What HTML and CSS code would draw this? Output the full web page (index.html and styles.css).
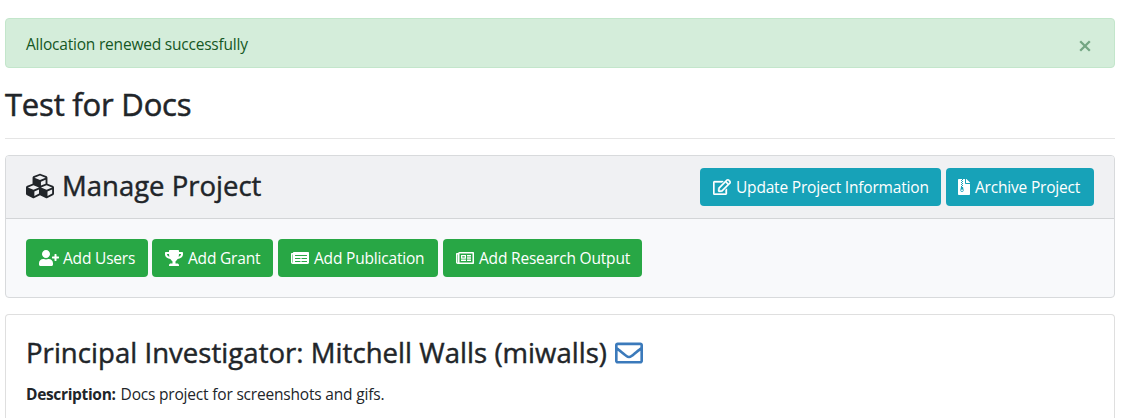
FILE: index.html
```html
<!DOCTYPE html>
<html lang="en">
<head>
<meta charset="utf-8">
<title>Test for Docs</title>
<link rel="stylesheet" href="styles.css">
</head>
<body>
<main class="container">
  <div class="alert"><span class="alert-text">Allocation renewed successfully</span><button class="close" aria-label="Close"><svg viewBox="0 0 12 12"><path d="M1.2 1.2l9.6 9.6M10.8 1.2l-9.6 9.6"/></svg></button></div>
  <h1 class="page-title">Test for Docs</h1>
  <hr class="rule">
  <section class="card manage">
    <header class="card-header">
      <h2 class="heading manage-heading"><svg class="icon icon-lg cubes" viewBox="0 0 512 512"><path d="M488.6 250.2L392 214V105.5c0-15-9.3-28.4-23.4-33.7l-100-37.5c-8.1-3.1-17.1-3.1-25.3 0l-100 37.5c-14.1 5.3-23.4 18.7-23.4 33.7V214l-96.6 36.2C9.3 255.5 0 268.9 0 283.9V394c0 13.6 7.7 26.1 19.9 32.2l100 50c10.1 5.1 22.1 5.1 32.2 0l103.9-52 103.9 52c10.1 5.1 22.1 5.1 32.2 0l100-50c12.2-6.1 19.9-18.6 19.9-32.2V283.9c0-15-9.3-28.4-23.4-33.7zM358 214.8l-85 31.9v-68.2l85-37v73.3zM154 104.1l102-38.2 102 38.2v.6l-102 41.4-102-41.4v-.6zm84 291.1l-85 42.5v-79.1l85-38.8v75.4zm0-112l-102 41.4-102-41.4v-.6l102-38.2 102 38.2v.6zm240 112l-85 42.5v-79.1l85-38.8v75.4zm0-112l-102 41.4-102-41.4v-.6l102-38.2 102 38.2v.6z"/></svg><span>Manage Project</span></h2>
      <div class="actions">
        <a class="btn info update"><svg class="icon w18 edit" viewBox="0 0 576 512"><path d="M402.3 344.9l32-32c5-5 13.7-1.5 13.7 5.7V464c0 26.5-21.5 48-48 48H48c-26.5 0-48-21.5-48-48V112c0-26.5 21.5-48 48-48h273.5c7.1 0 10.7 8.6 5.7 13.7l-32 32c-1.5 1.5-3.5 2.3-5.7 2.3H48v352h352V350.5c0-2.1.8-4.1 2.3-5.6zm156.6-201.8L296.3 405.7l-90.4 10c-26.2 2.9-48.5-19.2-45.6-45.6l10-90.4L432.9 17.1c22.9-22.9 59.9-22.9 82.7 0l43.2 43.2c22.9 22.9 22.9 60 .1 82.8zM460.1 174L402 115.9 216.2 301.8l-7.3 65.3 65.3-7.3L460.1 174zm64.8-79.7l-43.2-43.2c-4.1-4.1-10.8-4.1-14.8 0L436 82l58.1 58.1 30.9-30.9c4-4.2 4-10.8-.1-14.9z"/></svg><span>Update Project Information</span></a>
        <a class="btn info archive"><svg class="icon w12" viewBox="0 0 384 512"><path d="M377 105L279.1 7c-4.5-4.5-10.6-7-17-7H256v128h128v-6.1c0-6.3-2.5-12.4-7-16.9zM128.4 336c-17.9 0-32.4 12.1-32.4 27 0 15 14.6 27 32.5 27s32.4-12.1 32.4-27-14.6-27-32.5-27zM224 136V0h-63.6v32h-32V0H24C10.7 0 0 10.7 0 24v464c0 13.3 10.7 24 24 24h336c13.3 0 24-10.7 24-24V160H248c-13.2 0-24-10.8-24-24zM95.9 32h32v32h-32zm32.3 384c-33.2 0-58-30.4-51.4-62.9L96.4 256v-32h32v-32h-32v-32h32v-32h-32V96h32V64h32v32h-32v32h32v32h-32v32h32v32h-32v32h22.1c5.7 0 10.7 4.1 11.8 9.7l17.3 87.7c6.4 32.4-18.4 62.6-51.4 62.6z"/></svg><span>Archive Project</span></a>
      </div>
    </header>
    <div class="card-body">
      <a class="btn success users"><svg class="icon w20" viewBox="0 0 640 512"><path d="M624 208h-64v-64c0-8.8-7.2-16-16-16h-32c-8.8 0-16 7.2-16 16v64h-64c-8.8 0-16 7.2-16 16v32c0 8.8 7.2 16 16 16h64v64c0 8.8 7.2 16 16 16h32c8.8 0 16-7.2 16-16v-64h64c8.8 0 16-7.2 16-16v-32c0-8.8-7.2-16-16-16zm-400 48c70.7 0 128-57.3 128-128S294.7 0 224 0 96 57.3 96 128s57.3 128 128 128zm89.6 32h-16.7c-22.2 10.2-46.9 16-72.9 16s-50.6-5.8-72.9-16h-16.7C60.2 288 0 348.2 0 422.4V464c0 26.5 21.5 48 48 48h352c26.5 0 48-21.5 48-48v-41.6c0-74.2-60.2-134.4-134.4-134.4z"/></svg><span>Add Users</span></a>
      <a class="btn success grant"><svg class="icon w18" viewBox="0 0 576 512"><path d="M552 64H448V24c0-13.3-10.7-24-24-24H152c-13.3 0-24 10.7-24 24v40H24C10.7 64 0 74.7 0 88v56c0 35.7 22.5 72.4 61.9 100.7 31.5 22.7 69.8 37.1 110 41.7C203.3 338.5 240 360 240 360v72h-48c-35.3 0-64 20.7-64 56v12c0 6.6 5.4 12 12 12h296c6.6 0 12-5.4 12-12v-12c0-35.3-28.7-56-64-56h-48v-72s36.7-21.5 68.1-73.6c40.3-4.6 78.6-19 110-41.7 39.3-28.3 61.9-65 61.9-100.7V88c0-13.3-10.7-24-24-24zM99.3 192.8C74.9 175.2 64 155.6 64 144v-16h64.2c1 32.6 5.8 61.2 12.8 86.2-15.1-5.2-29.2-12.4-41.7-21.4zM512 144c0 16.1-17.7 36.1-35.3 48.8-12.5 9-26.7 16.2-41.8 21.4 7-25 11.8-53.6 12.8-86.2H512v16z"/></svg><span>Add Grant</span></a>
      <a class="btn success publication"><svg class="icon w18" viewBox="0 0 576 512"><path d="M552 64H88c-13.3 0-24 10.7-24 24v8H24c-13.3 0-24 10.7-24 24v272c0 30.9 25.1 56 56 56h472c26.5 0 48-21.5 48-48V88c0-13.3-10.7-24-24-24zM56 400a8 8 0 0 1-8-8V144h16v248a8 8 0 0 1-8 8zm236-16H140c-6.6 0-12-5.4-12-12v-8c0-6.6 5.4-12 12-12h152c6.6 0 12 5.4 12 12v8c0 6.6-5.4 12-12 12zm208 0H348c-6.6 0-12-5.4-12-12v-8c0-6.6 5.4-12 12-12h152c6.6 0 12 5.4 12 12v8c0 6.6-5.4 12-12 12zm-208-96H140c-6.6 0-12-5.4-12-12v-8c0-6.6 5.4-12 12-12h152c6.6 0 12 5.4 12 12v8c0 6.6-5.4 12-12 12zm208 0H348c-6.6 0-12-5.4-12-12v-8c0-6.6 5.4-12 12-12h152c6.6 0 12 5.4 12 12v8c0 6.6-5.4 12-12 12zm0-96H140c-6.6 0-12-5.4-12-12v-8c0-6.6 5.4-12 12-12h360c6.6 0 12 5.4 12 12v8c0 6.6-5.4 12-12 12z"/></svg><span>Add Publication</span></a>
      <a class="btn success output"><svg class="icon w18" viewBox="0 0 576 512"><path d="M552 64H112c-20.9 0-38.6 13.4-45.2 32H24c-13.3 0-24 10.7-24 24v272c0 30.9 25.1 56 56 56h496c13.3 0 24-10.7 24-24V88c0-13.3-10.7-24-24-24zM48 392V144h16v248c0 4.4-3.6 8-8 8s-8-3.6-8-8zm480 8H111.4c.4-2.6.6-5.3.6-8V112h416v288zM172 280h136c6.6 0 12-5.4 12-12v-96c0-6.6-5.4-12-12-12H172c-6.6 0-12 5.4-12 12v96c0 6.6 5.4 12 12 12zm28-80h80v40h-80v-40zm-40 140v-24c0-6.6 5.4-12 12-12h136c6.6 0 12 5.4 12 12v24c0 6.6-5.4 12-12 12H172c-6.6 0-12-5.4-12-12zm192 0v-24c0-6.6 5.4-12 12-12h104c6.6 0 12 5.4 12 12v24c0 6.6-5.4 12-12 12H364c-6.6 0-12-5.4-12-12zm0-144v-24c0-6.6 5.4-12 12-12h104c6.6 0 12 5.4 12 12v24c0 6.6-5.4 12-12 12H364c-6.6 0-12-5.4-12-12zm0 72v-24c0-6.6 5.4-12 12-12h104c6.6 0 12 5.4 12 12v24c0 6.6-5.4 12-12 12H364c-6.6 0-12-5.4-12-12z"/></svg><span>Add Research Output</span></a>
    </div>
  </section>
  <section class="card details">
    <h2 class="heading pi"><span>Principal Investigator: Mitchell Walls (miwalls)</span><svg class="icon icon-lg mail" viewBox="0 0 512 512"><path d="M464 64H48C21.5 64 0 85.5 0 112v288c0 26.5 21.5 48 48 48h416c26.5 0 48-21.5 48-48V112c0-26.5-21.5-48-48-48zm0 48v40.8c-22.4 18.3-58.2 46.7-134.6 106.5-16.8 13.2-50.2 45.1-73.4 44.7-23.2.4-56.6-31.5-73.4-44.7C106.2 199.5 70.4 171.1 48 152.8V112h416zM48 400V214.4c22.9 18.3 55.4 43.9 104.9 82.6 21.9 17.2 60.2 55.2 103.1 55 42.7.2 80.5-37.2 103.1-54.9 49.5-38.8 82-64.4 104.9-82.7V400H48z"/></svg></h2>
    <p class="description"><strong>Description:</strong><span>Docs project for screenshots and gifs.</span></p>
  </section>
</main>
</body>
</html>
```
FILE: styles.css
```css
* { box-sizing: border-box; }
html { overflow: hidden; }
body {
  margin: 0;
  background: #fff;
  color: #212529;
  font: 400 15.5px/24px "Open Sans", "Noto Sans", sans-serif;
  letter-spacing: -.19px;
  white-space: nowrap;
}
.container { width: 1110px; margin-left: 5px; padding-top: 18px; }
.alert {
  display: flex;
  justify-content: space-between;
  align-items: center;
  height: 50px;
  padding: 0 23px 0 20px;
  color: #155724;
  background: #d4edda;
  border: 1px solid #c3e6cb;
  border-radius: 4px;
}
.alert-text { padding-top: 2px; letter-spacing: -.21px; }
.close { display: flex; margin-top: 5px; padding: 0; border: 0; background: none; }
.close svg { width: 12px; height: 12px; fill: none; stroke: #74a683; stroke-width: 2.3; }
.page-title {
  margin: 17px 0 0;
  font-size: 31px;
  font-weight: 500;
  line-height: 38px;
  letter-spacing: -.2px;
  -webkit-text-stroke: .5px currentColor;
}
.rule { margin: 15px 0 16px; border: 0; border-top: 1px solid #e5e5e5; }
.card { border: 1px solid #dfdfdf; border-radius: 4px; background: #fff; }
.manage { height: 143px; background: #f8f9fb; border-color: #d8dadc; }
.card-header {
  display: flex;
  justify-content: space-between;
  align-items: center;
  height: 63px;
  padding: 0 20px;
  background: #f0f1f3;
  border-bottom: 1px solid #d3d5d7;
  border-radius: 3px 3px 0 0;
}
.heading {
  display: flex;
  align-items: center;
  gap: 8px;
  margin: 0;
  font-size: 27.5px;
  font-weight: 500;
  line-height: 34px;
  letter-spacing: 0;
  -webkit-text-stroke: .45px currentColor;
}
.manage-heading { margin-top: -2px; }
.icon { display: block; flex: none; height: 16px; fill: currentColor; -webkit-text-stroke: 0; }
.icon-lg { width: 28px; height: 28px; }
.cubes { margin-bottom: 1px; }
.edit { stroke: currentColor; stroke-width: 10; }
.w12 { width: 12px; }
.w18 { width: 18px; }
.w20 { width: 20px; }
.actions, .card-body { display: flex; gap: 5px; }
.card-body { padding: 20px; }
.btn {
  display: flex;
  align-items: center;
  gap: 5px;
  height: 38px;
  padding-left: 13px;
  border-radius: 4px;
  color: #fff;
}
.info { background: #17a2b8; }
.success { background: #28a745; }
.update { width: 241px; }
.archive { width: 148px; padding-left: 12px; }
.users { width: 122px; gap: 4px; margin-right: -1px; }
.grant { width: 121px; }
.publication { width: 160px; }
.output { width: 199px; }
.details { height: 104px; margin-top: 16px; padding: 21px 20px 0; border-bottom: 0; border-radius: 4px 4px 0 0; }
.pi { letter-spacing: .05px; }
.mail { color: #3b7abb; }
.description { display: flex; gap: 5px; margin: 12px 0 0; }
.description strong { letter-spacing: -.33px; }
```
